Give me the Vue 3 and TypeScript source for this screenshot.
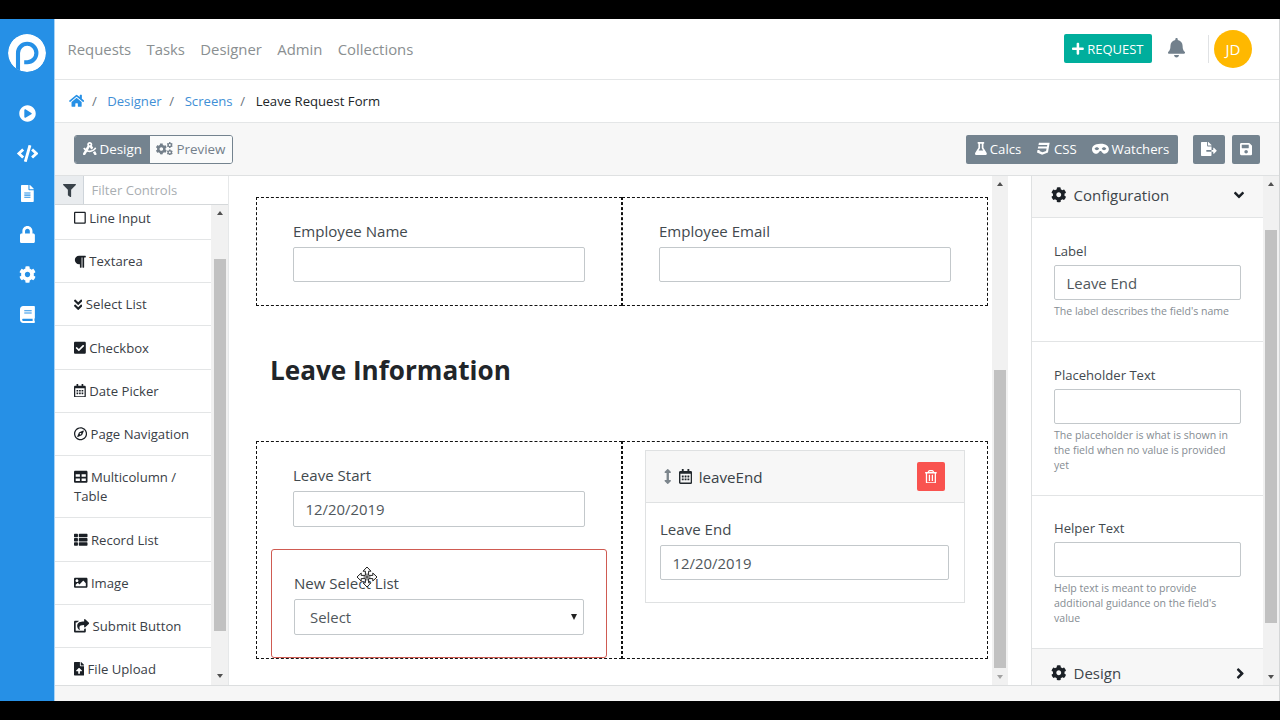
<script setup lang="ts">
import { h, type FunctionalComponent } from 'vue'

interface Glyph { w: number; d: string }

const glyphs: Record<string, Glyph> = {
  play: { w: 512, d: 'M256 8C119 8 8 119 8 256s111 248 248 248 248-111 248-248S393 8 256 8zm115.7 272l-176 101c-15.8 8.8-35.7-2.5-35.7-21V152c0-18.4 19.8-29.8 35.7-21l176 107c16.4 9.2 16.4 32.9 0 42z' },
  code: { w: 640, d: 'M278.9 511.5l-61-17.7c-6.4-1.8-10-8.5-8.2-14.9L346.2 8.7c1.8-6.4 8.5-10 14.9-8.2l61 17.7c6.4 1.8 10 8.5 8.2 14.9L293.8 503.3c-1.9 6.4-8.5 10.1-14.9 8.2zm-114-112.2l43.5-46.4c4.6-4.9 4.3-12.7-.8-17.2L117 256l90.6-79.7c5.1-4.5 5.5-12.3.8-17.2l-43.5-46.4c-4.5-4.8-12.1-5.1-17-.5L3.8 247.2c-5.1 4.7-5.1 12.8 0 17.5l144.1 135.1c4.9 4.6 12.5 4.4 17-.5zm327.2.6l144.1-135.1c5.1-4.7 5.1-12.8 0-17.5L492.1 112.1c-4.8-4.5-12.4-4.3-17 .5L431.6 159c-4.6 4.9-4.3 12.7.8 17.2L523 256l-90.6 79.7c-5.1 4.5-5.5 12.3-.8 17.2l43.5 46.4c4.5 4.9 12.1 5.1 17 .6z' },
  file: { w: 384, d: 'M224 136V0H24C10.7 0 0 10.7 0 24v464c0 13.3 10.7 24 24 24h336c13.3 0 24-10.7 24-24V160H248c-13.2 0-24-10.8-24-24zm64 236c0 6.6-5.4 12-12 12H108c-6.6 0-12-5.4-12-12v-8c0-6.6 5.4-12 12-12h168c6.6 0 12 5.4 12 12v8zm0-64c0 6.6-5.4 12-12 12H108c-6.6 0-12-5.4-12-12v-8c0-6.6 5.4-12 12-12h168c6.6 0 12 5.4 12 12v8zm0-72v8c0 6.6-5.4 12-12 12H108c-6.6 0-12-5.4-12-12v-8c0-6.6 5.4-12 12-12h168c6.6 0 12 5.4 12 12zm96-114.1v6.1H256V0h6.1c6.4 0 12.5 2.5 17 7l97.9 98c4.5 4.5 7 10.6 7 16.9z' },
  lock: { w: 448, d: 'M400 224h-24v-72C376 68.2 307.8 0 224 0S72 68.2 72 152v72H48c-26.5 0-48 21.5-48 48v192c0 26.5 21.5 48 48 48h352c26.5 0 48-21.5 48-48V272c0-26.5-21.5-48-48-48zm-104 0H152v-72c0-39.7 32.3-72 72-72s72 32.3 72 72v72z' },
  cog: { w: 512, d: 'M487.4 315.7l-42.6-24.6c4.3-23.2 4.3-47 0-70.2l42.6-24.6c4.9-2.8 7.1-8.6 5.5-14-11.1-35.6-30-67.8-54.7-94.6-3.8-4.1-10-5.1-14.8-2.3L380.8 110c-17.9-15.4-38.5-27.3-60.8-35.1V25.8c0-5.6-3.9-10.5-9.4-11.7-36.7-8.2-74.3-7.8-109.2 0-5.5 1.2-9.4 6.1-9.4 11.7V75c-22.2 7.9-42.8 19.8-60.8 35.1L88.7 85.5c-4.9-2.8-11-1.9-14.8 2.3-24.7 26.7-43.6 58.9-54.7 94.6-1.7 5.4.6 11.2 5.5 14L67.3 221c-4.3 23.2-4.3 47 0 70.2l-42.6 24.6c-4.9 2.8-7.1 8.6-5.5 14 11.1 35.6 30 67.8 54.7 94.6 3.8 4.1 10 5.1 14.8 2.3l42.6-24.6c17.9 15.4 38.5 27.3 60.8 35.1v49.2c0 5.6 3.9 10.5 9.4 11.7 36.7 8.2 74.3 7.8 109.2 0 5.5-1.2 9.4-6.1 9.4-11.7v-49.2c22.2-7.9 42.8-19.8 60.8-35.1l42.6 24.6c4.9 2.8 11 1.9 14.8-2.3 24.7-26.7 43.6-58.9 54.7-94.6 1.5-5.5-.7-11.3-5.6-14.1zM256 336c-44.1 0-80-35.9-80-80s35.9-80 80-80 80 35.9 80 80-35.9 80-80 80z' },
  book: { w: 448, d: 'M448 360V24c0-13.3-10.7-24-24-24H96C43 0 0 43 0 96v320c0 53 43 96 96 96h328c13.3 0 24-10.7 24-24v-16c0-7.5-3.5-14.3-8.9-18.7-4.2-15.4-4.2-59.3 0-74.7 5.4-4.3 8.9-11.1 8.9-18.6zM128 134c0-3.3 2.7-6 6-6h212c3.3 0 6 2.7 6 6v20c0 3.3-2.7 6-6 6H134c-3.3 0-6-2.7-6-6v-20zm0 64c0-3.3 2.7-6 6-6h212c3.3 0 6 2.7 6 6v20c0 3.3-2.7 6-6 6H134c-3.3 0-6-2.7-6-6v-20zm253.4 250H96c-17.7 0-32-14.3-32-32 0-17.6 14.4-32 32-32h285.4c-1.9 17.1-1.9 46.9 0 64z' },
  home: { w: 576, d: 'M280.37 148.26L96 300.11V464a16 16 0 0 0 16 16l112.06-.29a16 16 0 0 0 15.92-16V368a16 16 0 0 1 16-16h64a16 16 0 0 1 16 16v95.64a16 16 0 0 0 16 16.05L464 480a16 16 0 0 0 16-16V300L295.67 148.26a12.19 12.19 0 0 0-15.3 0zM571.6 251.47L488 182.56V44.05a12 12 0 0 0-12-12h-56a12 12 0 0 0-12 12v72.61L318.47 43a48 48 0 0 0-61 0L4.34 251.47a12 12 0 0 0-1.6 16.9l25.5 31A12 12 0 0 0 45.15 301l235.22-193.74a12.19 12.19 0 0 1 15.3 0L530.9 301a12 12 0 0 0 16.9-1.6l25.5-31a12 12 0 0 0-1.7-16.93z' },
  filter: { w: 512, d: 'M487.976 0H24.028C2.71 0-8.047 25.866 7.058 40.971L192 225.941V432c0 7.831 3.821 15.17 10.237 19.662l80 55.98C298.02 518.69 320 507.493 320 487.98V225.941l184.947-184.97C520.021 25.896 509.338 0 487.976 0z' },
  plus: { w: 448, d: 'M416 208H272V64c0-17.67-14.33-32-32-32h-32c-17.67 0-32 14.33-32 32v144H32c-17.67 0-32 14.33-32 32v32c0 17.67 14.33 32 32 32h144v144c0 17.67 14.33 32 32 32h32c17.67 0 32-14.33 32-32V304h144c17.67 0 32-14.33 32-32v-32c0-17.67-14.33-32-32-32z' },
  bell: { w: 448, d: 'M224 512c35.32 0 63.97-28.65 63.97-64H160.03c0 35.35 28.65 64 63.97 64zm215.39-149.71c-19.32-20.76-55.47-51.99-55.47-154.29 0-77.7-54.48-139.9-127.94-155.16V32c0-17.67-14.32-32-31.98-32s-31.98 14.33-31.98 32v20.84C118.56 68.1 64.08 130.3 64.08 208c0 102.3-36.15 133.53-55.47 154.29-6 6.45-8.66 14.16-8.61 21.71.11 16.4 12.98 32 32.1 32h383.8c19.12 0 32-15.6 32.1-32 .05-7.55-2.61-15.27-8.61-21.71z' },
  compass: { w: 512, d: 'M457.01 344.42c-25.05 20.33-52.63 37.18-82.54 49.05l54.38 94.19 53.95 23.04c9.81 4.19 20.89-2.21 22.17-12.8l7.02-58.25-54.98-95.23zm42.49-94.56c4.86-7.67 1.89-17.99-6.05-22.39l-28.07-15.57c-7.48-4.15-16.61-1.46-21.26 5.72C403.01 281.15 332.25 320 256 320c-23.93 0-47.23-4.25-69.41-11.53l67.36-116.68c.7.02 1.34.21 2.04.21s1.35-.19 2.04-.21l51.09 88.5c31.23-8.96 59.56-25.75 82.61-48.92l-51.79-89.71C347.39 128.03 352 112.63 352 96c0-53.02-42.98-96-96-96s-96 42.98-96 96c0 16.63 4.61 32.03 12.05 45.66l-68.3 118.31c-12.55-11.61-23.96-24.59-33.68-39-4.79-7.1-13.97-9.62-21.38-5.33l-27.75 16.07c-7.85 4.54-10.63 14.9-5.64 22.47 15.57 23.64 34.69 44.21 55.98 62.02L0 439.66l7.02 58.25c1.28 10.59 12.36 16.99 22.17 12.8l53.95-23.04 70.8-122.63C186.13 377.28 220.62 384 256 384c99.05 0 190.88-51.01 243.5-134.14zM256 64c17.67 0 32 14.33 32 32s-14.33 32-32 32-32-14.33-32-32 14.33-32 32-32z' },
  flask: { w: 448, d: 'M437.2 403.5L320 215V64h8c13.3 0 24-10.7 24-24V24c0-13.3-10.7-24-24-24H120c-13.3 0-24 10.7-24 24v16c0 13.3 10.7 24 24 24h8v151L10.8 403.5C-18.5 450.6 15.3 512 70.9 512h306.2c55.7 0 89.4-61.5 60.1-108.5zM137.9 320l48.2-77.6c3.7-5.2 5.8-11.6 5.8-18.4V64h64v160c0 6.9 2.2 13.2 5.8 18.4l48.2 77.6h-172z' },
  css: { w: 512, d: 'M480 32l-64 368-223.3 80L0 400l19.6-94.8h82l-8 40.6L210 390.2l134.1-44.4 18.8-97.1H29.5l16-82h333.7l10.5-52.7H56.3l16.3-82H480z' },
  mask: { w: 640, d: 'M320.67 64c-442.6 0-357.57 384-158.46 384 39.9 0 77.47-20.69 101.42-55.86l25.73-37.79c15.66-22.99 46.97-22.99 62.63 0l25.73 37.79C401.66 427.31 439.23 448 479.13 448c189.86 0 290.63-384-158.46-384zM184 308.36c-41.06 0-67.76-25.66-80.08-41.05-5.23-6.53-5.23-16.09 0-22.63 12.32-15.4 39.01-41.05 80.08-41.05s67.76 25.66 80.08 41.05c5.23 6.53 5.23 16.09 0 22.63-12.32 15.4-39.02 41.05-80.08 41.05zm272 0c-41.06 0-67.76-25.66-80.08-41.05-5.23-6.53-5.23-16.09 0-22.63 12.32-15.4 39.01-41.05 80.08-41.05s67.76 25.66 80.08 41.05c5.23 6.53 5.23 16.09 0 22.63-12.32 15.4-39.02 41.05-80.08 41.05z' },
  export: { w: 576, d: 'M384 121.9c0-6.3-2.5-12.4-7-16.9L279.1 7c-4.5-4.5-10.6-7-17-7H256v128h128zM571 308l-95.7-96.4c-10.1-10.1-27.4-3-27.4 11.3V288h-64v64h64v65.2c0 14.3 17.3 21.4 27.4 11.3L571 332c6.6-6.6 6.6-17.4 0-24zm-379 28v-32c0-8.8 7.2-16 16-16h176V160H248c-13.2 0-24-10.8-24-24V0H24C10.7 0 0 10.7 0 24v464c0 13.3 10.7 24 24 24h336c13.3 0 24-10.7 24-24V352H208c-8.8 0-16-7.2-16-16z' },
  save: { w: 448, d: 'M433.941 129.941l-83.882-83.882A48 48 0 0 0 316.118 32H48C21.49 32 0 53.49 0 80v352c0 26.51 21.49 48 48 48h352c26.51 0 48-21.49 48-48V163.882a48 48 0 0 0-14.059-33.941zM224 416c-35.346 0-64-28.654-64-64 0-35.346 28.654-64 64-64s64 28.654 64 64c0 35.346-28.654 64-64 64zm96-304.52V212c0 6.627-5.373 12-12 12H76c-6.627 0-12-5.373-12-12V108c0-6.627 5.373-12 12-12h228.52c3.183 0 6.235 1.264 8.485 3.515l3.48 3.48A11.996 11.996 0 0 1 320 111.48z' },
  square: { w: 448, d: 'M400 32H48C21.5 32 0 53.5 0 80v352c0 26.5 21.5 48 48 48h352c26.5 0 48-21.5 48-48V80c0-26.5-21.5-48-48-48zm-6 400H54c-3.3 0-6-2.7-6-6V86c0-3.3 2.7-6 6-6h340c3.3 0 6 2.7 6 6v340c0 3.3-2.7 6-6 6z' },
  paragraph: { w: 448, d: 'M448 48v32a16 16 0 0 1-16 16h-48v368a16 16 0 0 1-16 16h-32a16 16 0 0 1-16-16V96h-32v368a16 16 0 0 1-16 16h-32a16 16 0 0 1-16-16V352h-32a160 160 0 0 1 0-320h240a16 16 0 0 1 16 16z' },
  chevrons: { w: 320, d: 'M143 256.3L7 120.3c-9.4-9.4-9.4-24.6 0-33.9l22.6-22.6c9.4-9.4 24.6-9.4 33.9 0l96.4 96.4 96.4-96.4c9.4-9.4 24.6-9.4 33.9 0L313 86.3c9.4 9.4 9.4 24.6 0 33.9l-136 136c-9.4 9.5-24.6 9.5-34 .1zm34 192l136-136c9.4-9.4 9.4-24.6 0-33.9l-22.6-22.6c-9.4-9.4-24.6-9.4-33.9 0L160 352.1l-96.4-96.4c-9.4-9.4-24.6-9.4-33.9 0L7 278.3c-9.4 9.4-9.4 24.6 0 33.9l136 136c9.4 9.5 24.6 9.5 34 .1z' },
  check: { w: 448, d: 'M400 480H48c-26.51 0-48-21.49-48-48V80c0-26.51 21.49-48 48-48h352c26.51 0 48 21.49 48 48v352c0 26.51-21.49 48-48 48zm-204.686-98.059l184-184c6.248-6.248 6.248-16.379 0-22.627l-22.627-22.627c-6.248-6.248-16.379-6.249-22.628 0L184 302.745l-70.059-70.059c-6.248-6.248-16.379-6.248-22.628 0l-22.627 22.627c-6.248 6.248-6.248 16.379 0 22.627l104 104c6.249 6.25 16.379 6.25 22.628.001z' },
  calendar: { w: 448, d: 'M148 288h-40c-6.6 0-12-5.4-12-12v-40c0-6.6 5.4-12 12-12h40c6.6 0 12 5.4 12 12v40c0 6.6-5.4 12-12 12zm108-12v-40c0-6.6-5.4-12-12-12h-40c-6.6 0-12 5.4-12 12v40c0 6.6 5.4 12 12 12h40c6.6 0 12-5.4 12-12zm96 0v-40c0-6.6-5.4-12-12-12h-40c-6.6 0-12 5.4-12 12v40c0 6.6 5.4 12 12 12h40c6.6 0 12-5.4 12-12zm-96 96v-40c0-6.6-5.4-12-12-12h-40c-6.6 0-12 5.4-12 12v40c0 6.6 5.4 12 12 12h40c6.6 0 12-5.4 12-12zm-96 0v-40c0-6.6-5.4-12-12-12h-40c-6.6 0-12 5.4-12 12v40c0 6.6 5.4 12 12 12h40c6.6 0 12-5.4 12-12zm192 0v-40c0-6.6-5.4-12-12-12h-40c-6.6 0-12 5.4-12 12v40c0 6.6 5.4 12 12 12h40c6.6 0 12-5.4 12-12zm96-260v352c0 26.5-21.5 48-48 48H48c-26.5 0-48-21.5-48-48V112c0-26.5 21.5-48 48-48h48V12c0-6.6 5.4-12 12-12h40c6.6 0 12 5.4 12 12v52h128V12c0-6.6 5.4-12 12-12h40c6.6 0 12 5.4 12 12v52h48c26.5 0 48 21.5 48 48zm-48 346V160H48v298c0 3.3 2.7 6 6 6h340c3.3 0 6-2.7 6-6z' },
  navigate: { w: 496, d: 'M347.94 129.86L203.6 195.83a31.938 31.938 0 0 0-15.77 15.77l-65.97 144.34c-7.61 16.65 9.54 33.81 26.2 26.2l144.34-65.97a31.938 31.938 0 0 0 15.77-15.77l65.97-144.34c7.61-16.66-9.54-33.81-26.2-26.2zm-77.36 148.72c-12.47 12.47-32.69 12.47-45.16 0-12.47-12.47-12.47-32.69 0-45.16 12.47-12.47 32.69-12.47 45.16 0 12.47 12.47 12.47 32.69 0 45.16zM248 8C111.03 8 0 119.03 0 256s111.03 248 248 248 248-111.03 248-248S384.97 8 248 8zm0 448c-110.28 0-200-89.72-200-200S137.72 56 248 56s200 89.72 200 200-89.72 200-200 200z' },
  table: { w: 512, d: 'M464 32H48C21.49 32 0 53.49 0 80v352c0 26.51 21.49 48 48 48h416c26.51 0 48-21.49 48-48V80c0-26.51-21.49-48-48-48zM224 416H64v-96h160v96zm0-160H64v-96h160v96zm224 160H288v-96h160v96zm0-160H288v-96h160v96z' },
  list: { w: 512, d: 'M149.333 216v80c0 13.255-10.745 24-24 24H24c-13.255 0-24-10.745-24-24v-80c0-13.255 10.745-24 24-24h101.333c13.255 0 24 10.745 24 24zM0 376v80c0 13.255 10.745 24 24 24h101.333c13.255 0 24-10.745 24-24v-80c0-13.255-10.745-24-24-24H24c-13.255 0-24 10.745-24 24zM125.333 32H24C10.745 32 0 42.745 0 56v80c0 13.255 10.745 24 24 24h101.333c13.255 0 24-10.745 24-24V56c0-13.255-10.745-24-24-24zm80 448H488c13.255 0 24-10.745 24-24v-80c0-13.255-10.745-24-24-24H205.333c-13.255 0-24 10.745-24 24v80c0 13.255 10.745 24 24 24zm-24-424v80c0 13.255 10.745 24 24 24H488c13.255 0 24-10.745 24-24V56c0-13.255-10.745-24-24-24H205.333c-13.255 0-24 10.745-24 24zm24 264H488c13.255 0 24-10.745 24-24v-80c0-13.255-10.745-24-24-24H205.333c-13.255 0-24 10.745-24 24v80c0 13.255 10.745 24 24 24z' },
  image: { w: 512, d: 'M464 448H48c-26.51 0-48-21.49-48-48V112c0-26.51 21.49-48 48-48h416c26.51 0 48 21.49 48 48v288c0 26.51-21.49 48-48 48zM112 120c-30.928 0-56 25.072-56 56s25.072 56 56 56 56-25.072 56-56-25.072-56-56-56zM64 384h384V272l-87.515-87.515c-4.686-4.686-12.284-4.686-16.971 0L208 320l-55.515-55.515c-4.686-4.686-12.284-4.686-16.971 0L64 336v48z' },
  share: { w: 576, d: 'M568.482 177.448L424.479 313.433C409.3 327.768 384 317.14 384 295.985v-71.963c-144.575.97-205.566 35.113-164.775 171.353 4.483 14.973-12.846 26.567-25.006 17.33C155.252 383.105 120 326.488 120 269.339c0-143.937 117.599-172.5 264-173.312V24.012c0-21.174 25.317-31.768 40.479-17.448l144.003 135.988c10.02 9.463 10.028 25.425 0 34.896zM384 379.128V448H64V128h50.916a11.99 11.99 0 0 0 8.648-3.693c14.953-15.568 32.237-27.89 51.014-37.676C185.708 80.83 181.584 64 169.033 64H48C21.49 64 0 85.49 0 112v352c0 26.51 21.49 48 48 48h352c26.51 0 48-21.49 48-48v-88.806c0-8.288-8.197-14.066-16.011-11.302a71.83 71.83 0 0 1-34.189 3.377c-7.27-1.046-13.8 4.514-13.8 11.859z' },
  upload: { w: 384, d: 'M224 136V0H24C10.7 0 0 10.7 0 24v464c0 13.3 10.7 24 24 24h336c13.3 0 24-10.7 24-24V160H248c-13.2 0-24-10.8-24-24zm65.18 216.01H224v80c0 8.84-7.16 16-16 16h-32c-8.84 0-16-7.16-16-16v-80H94.82c-14.28 0-21.41-17.29-11.27-27.36l96.42-95.7c6.65-6.61 17.39-6.61 24.04 0l96.42 95.7c10.15 10.07 3.03 27.36-11.25 27.36zM377 105L279.1 7c-4.5-4.5-10.6-7-17-7H256v128h128v-6.1c0-6.3-2.5-12.4-7-16.9z' },
  updown: { w: 256, d: 'M214.059 377.941H168V134.059h46.059c21.382 0 32.09-25.851 16.971-40.971L144.971 7.029c-9.373-9.373-24.568-9.373-33.941 0L24.971 93.088c-15.119 15.119-4.411 40.971 16.971 40.971H88v243.882H41.941c-21.382 0-32.09 25.851-16.971 40.971l86.059 86.059c9.373 9.373 24.568 9.373 33.941 0l86.059-86.059c15.12-15.119 4.412-40.971-16.97-40.971z' },
  trash: { w: 448, d: 'M268 416h24a12 12 0 0 0 12-12V188a12 12 0 0 0-12-12h-24a12 12 0 0 0-12 12v216a12 12 0 0 0 12 12zM432 80h-82.41l-34-56.7A48 48 0 0 0 274.41 0H173.59a48 48 0 0 0-41.16 23.3L98.41 80H16A16 16 0 0 0 0 96v16a16 16 0 0 0 16 16h16v336a48 48 0 0 0 48 48h288a48 48 0 0 0 48-48V128h16a16 16 0 0 0 16-16V96a16 16 0 0 0-16-16zM171.84 50.91A6 6 0 0 1 177 48h94a6 6 0 0 1 5.15 2.91L293.61 80H154.39zM368 464H80V128h288zm-212-48h24a12 12 0 0 0 12-12V188a12 12 0 0 0-12-12h-24a12 12 0 0 0-12 12v216a12 12 0 0 0 12 12z' },
  down: { w: 320, d: 'M143 352.3L7 216.3c-9.4-9.4-9.4-24.6 0-33.9l22.6-22.6c9.4-9.4 24.6-9.4 33.9 0l96.4 96.4 96.4-96.4c9.4-9.4 24.6-9.4 33.9 0l22.6 22.6c9.4 9.4 9.4 24.6 0 33.9l-136 136c-9.2 9.4-24.4 9.4-33.8 0z' },
  right: { w: 256, d: 'M224.3 273l-136 136c-9.4 9.4-24.6 9.4-33.9 0l-22.6-22.6c-9.4-9.4-9.4-24.6 0-33.9l96.4-96.4-96.4-96.4c-9.4-9.4-9.4-24.6 0-33.9L54.3 103c9.4-9.4 24.6-9.4 33.9 0l136 136c9.5 9.4 9.5 24.6.1 34z' },
}

const Icon: FunctionalComponent<{ name: string; size: number }> = (props) => {
  const g = glyphs[props.name]
  return h(
    'svg',
    { viewBox: `0 0 ${g.w} 512`, width: (g.w / 512) * props.size, height: props.size, fill: 'currentColor' },
    [h('path', { d: g.d, 'fill-rule': props.name === 'flask' ? 'evenodd' : 'nonzero' })],
  )
}
Icon.props = ['name', 'size']

const rail = ['play', 'code', 'file', 'lock', 'cog', 'book']
const nav = ['Requests', 'Tasks', 'Designer', 'Admin', 'Collections']
const controls = [
  { icon: 'square', label: 'Line Input' },
  { icon: 'paragraph', label: 'Textarea' },
  { icon: 'chevrons', label: 'Select List' },
  { icon: 'check', label: 'Checkbox' },
  { icon: 'calendar', label: 'Date Picker' },
  { icon: 'navigate', label: 'Page Navigation' },
  { icon: 'table', label: 'Multicolumn / Table' },
  { icon: 'list', label: 'Record List' },
  { icon: 'image', label: 'Image' },
  { icon: 'share', label: 'Submit Button' },
  { icon: 'upload', label: 'File Upload' },
]
const settings = [
  { label: 'Label', value: 'Leave End', help: "The label describes the field's name" },
  { label: 'Placeholder Text', value: '', help: 'The placeholder is what is shown in the field when no value is provided yet' },
  { label: 'Helper Text', value: '', help: "Help text is meant to provide additional guidance on the field's value" },
]
</script>

<template>
  <div class="screen">
    <div class="app">
      <aside class="rail">
        <svg class="logo" viewBox="0 0 38 38" width="38" height="38">
          <circle cx="19" cy="19" r="19" fill="#fff" />
          <path d="M10 40V19a9.2 9.2 0 1 1 9.2 9.2H16.2" fill="none" stroke="#2690e6" stroke-width="4.1" />
        </svg>
        <nav class="rail-items">
          <span v-for="r in rail" :key="r" class="rail-item"><Icon :name="r" :size="17" /></span>
        </nav>
      </aside>

      <div class="main">
        <header class="top">
          <nav class="nav"><a v-for="n in nav" :key="n">{{ n }}</a></nav>
          <div class="top-right">
            <button class="request"><Icon name="plus" :size="13.5" />REQUEST</button>
            <Icon class="bell" name="bell" :size="19.5" />
            <span class="avatar-wrap"><span class="avatar">JD</span></span>
          </div>
        </header>

        <div class="crumbs">
          <Icon class="home" name="home" :size="13.5" /><i>/</i><a>Designer</a><i>/</i><a>Screens</a><i>/</i><b>Leave Request Form</b>
        </div>

        <div class="toolbar">
          <div class="modes">
            <button class="mode active"><Icon name="compass" :size="13.5" />Design</button>
            <button class="mode">
              <svg viewBox="0 0 640 512" width="17" height="13.6" fill="currentColor">
                <path :d="glyphs.cog.d" transform="translate(-14 46) scale(.84)" />
                <path :d="glyphs.cog.d" transform="translate(404 0) scale(.45)" />
                <path :d="glyphs.cog.d" transform="translate(404 276) scale(.45)" />
              </svg>Preview
            </button>
          </div>
          <div class="actions">
            <div class="group">
              <span><Icon name="flask" :size="13.5" />Calcs</span>
              <span class="g2"><Icon name="css" :size="13.5" />CSS</span>
              <span class="g3"><Icon name="mask" :size="13.5" />Watchers</span>
            </div>
            <button class="square export"><Icon name="export" :size="14" /></button>
            <button class="square save"><Icon name="save" :size="14" /></button>
          </div>
        </div>

        <div class="work">
          <section class="palette">
            <div class="filter">
              <span class="filter-icon"><Icon name="filter" :size="13" /></span>
              <input class="filter-input" placeholder="Filter Controls" />
            </div>
            <div class="palette-body">
              <ul class="list">
                <li v-for="c in controls" :key="c.label"><Icon :name="c.icon" :size="13.5" />&nbsp;{{ c.label }}</li>
              </ul>
              <div class="bar bar-list"><span class="up"></span><span class="thumb"></span><span class="dn"></span></div>
            </div>
          </section>

          <section class="canvas">
            <div class="row row-a">
              <div class="cell"><label>Employee Name</label><input class="field" /></div>
              <div class="cell"><label>Employee Email</label><input class="field" /></div>
            </div>
            <h1>Leave Information</h1>
            <div class="row row-b">
              <div class="cell">
                <label>Leave Start</label><input class="field" value="12/20/2019" />
                <div class="picked">
                  <label>New Select List</label>
                  <div class="field select"><span>Select</span><span class="caret"></span></div>
                  <svg class="cursor" viewBox="0 0 22 22" width="22" height="22">
                    <path d="M11 1l4 4.2h-2.4v4.2h4.2V7L21 11l-4.2 4v-2.4h-4.2v4.2H15L11 21l-4-4.2h2.4v-4.2H5.2V15L1 11l4.2-4v2.4h4.2V5.2H7z" fill="#fff" stroke="#222" stroke-width="1" stroke-linejoin="round" />
                    <path d="M11 7.5v7M7.5 11h7" stroke="#222" stroke-width="1" />
                  </svg>
                </div>
              </div>
              <div class="cell cell-card">
                <div class="card">
                  <div class="card-head">
                    <Icon class="drag" name="updown" :size="15" />
                    <Icon class="cal" name="calendar" :size="15" />
                    <span>leaveEnd</span>
                    <button class="trash"><Icon name="trash" :size="13.5" /></button>
                  </div>
                  <div class="card-body"><label>Leave End</label><input class="field" value="12/20/2019" /></div>
                </div>
              </div>
            </div>
          </section>
          <div class="bar bar-canvas"><span class="up"></span><span class="thumb"></span><span class="dn faint"></span></div>

          <section class="inspector">
            <div class="inspector-body">
              <div class="section"><Icon name="cog" :size="15.5" /><span>Configuration</span><Icon class="arrow" name="down" :size="16" /></div>
              <div v-for="(s, i) in settings" :key="s.label" class="setting" :class="'s' + i">
                <label>{{ s.label }}</label>
                <input class="field" :value="s.value" />
                <p>{{ s.help }}</p>
              </div>
              <div class="section last"><Icon name="cog" :size="15.5" /><span>Design</span><Icon class="arrow" name="right" :size="17" /></div>
            </div>
            <div class="bar bar-inspector"><span class="up"></span><span class="thumb"></span><span class="dn"></span></div>
          </section>
        </div>
        <footer class="foot"></footer>
      </div>
    </div>
  </div>
</template>

<style>
body { background: #000; overflow: hidden; }
</style>

<style scoped>
* { box-sizing: border-box; }
svg { display: block; flex: none; }
button { font: inherit; border: 0; margin: 0; padding: 0; cursor: pointer; }
.screen { width: 1280px; height: 720px; background: #000; padding: 19px 0; overflow: hidden; font-family: "Open Sans", "Noto Sans", sans-serif; font-size: 14px; color: #3a4248; }
.app { display: flex; height: 682px; background: #fff; }
.rail { width: 55px; background: #2690e6; border-right: 1px solid #a9d3f6; display: flex; flex-direction: column; align-items: center; padding-top: 14.5px; color: #fff; }
.logo { border-radius: 50%; }
.rail-items { display: flex; flex-direction: column; padding: 21.5px 0 0 1px; }
.rail-item { height: 40.3px; display: flex; align-items: center; justify-content: center; }
.main { width: 1225px; display: flex; flex-direction: column; border-right: 1px solid #d4d6d7; }
.top { height: 61px; border-bottom: 1px solid #e4e6e7; display: flex; align-items: center; justify-content: space-between; padding: 0 27px 1px 12.5px; }
.nav { display: flex; gap: 15.3px; font-size: 14.9px; color: #8a8f91; }
.top-right { display: flex; align-items: center; }
.request { width: 88px; height: 29px; background: #00ae9c; color: #fff; border-radius: 2px; display: flex; align-items: center; justify-content: center; gap: 3px; font-size: 13px; }
.bell { color: #72808c; margin-left: 16px; margin-bottom: 1px; }
.avatar-wrap { display: flex; margin-left: 23px; padding-left: 6px; background: linear-gradient(#e0e2e4, #e0e2e4) left center / 1px 28px no-repeat; }
.avatar { width: 38px; height: 38px; border-radius: 50%; background: #ffb800; color: #fff; font-size: 15px; display: flex; align-items: center; justify-content: center; }
.crumbs { height: 43px; border-bottom: 1px solid #e4e6e7; display: flex; align-items: center; padding-left: 14px; font-size: 13.15px; color: #3f8fd6; }
.crumbs i { font-style: normal; color: #6c757d; margin: 0 10.5px 0 7.7px; }
.crumbs b { font-weight: 400; color: #212529; }
.home { color: #2690e6; }
.toolbar { height: 53px; background: #f7f7f7; border-bottom: 1px solid #dfe1e2; display: flex; align-items: center; justify-content: space-between; padding: 0 19px; }
.modes { display: flex; border: 1px solid #74838f; border-radius: 3px; height: 29px; width: 159px; overflow: hidden; }
.mode { display: flex; align-items: center; justify-content: center; gap: 3px; width: 82px; background: #fafbfb; color: #74808b; font-size: 13.4px; padding-bottom: 1px; }
.mode.active { width: 75px; background: #74838f; color: #fff; }
.actions { display: flex; color: #fff; font-size: 13.2px; }
.group { width: 212px; height: 29px; background: #74838f; border-radius: 2px; display: flex; align-items: center; padding: 0 0 1px 9px; }
.group span { display: flex; align-items: center; gap: 3px; }
.group .g2 { margin-left: 16px; }
.group .g3 { margin-left: 15px; }
.square { height: 29px; background: #74838f; color: #fff; border-radius: 2px; display: flex; align-items: center; justify-content: center; }
.export { width: 32px; margin-left: 15px; }
.save { width: 28px; margin-left: 7px; }
.work { height: 509px; display: flex; overflow: hidden; }
.foot { flex: 1; background: #f6f6f6; border-top: 1px solid #dcdedf; }
.palette { width: 174px; border-right: 1px solid #e6e8e9; display: flex; flex-direction: column; }
.filter { height: 29px; display: flex; border-bottom: 1px solid #d5d8da; }
.filter-icon { width: 29px; background: #e9ecef; border-right: 1px solid #ced4da; display: flex; align-items: center; justify-content: center; color: #39424a; }
.filter-input { flex: 1; min-width: 0; border: 0; outline: 0; padding: 0 7.5px; font: 13.1px "Open Sans", sans-serif; background: #fff; }
.filter-input::placeholder { color: #a9aeb2; opacity: 1; }
.palette-body { height: 480px; display: flex; overflow: hidden; }
.list { width: 156px; margin: -8px 0 0; padding: 0; list-style: none; font-size: 13.15px; line-height: 19.5px; color: #3a4046; }
.list li { border-bottom: 1px solid #e3e5e6; padding: 12.1px 10px 10.55px 19px; }
.list svg { display: inline-block; vertical-align: -1.8px; color: #1b2026; }
.bar { width: 16px; background: #f1f1f1; display: flex; flex-direction: column; align-items: center; flex: none; }
.bar .up, .bar .dn { width: 0; height: 0; border: 3.5px solid transparent; flex: none; }
.bar .up { border-top: 0; border-bottom: 4px solid #505050; }
.bar .dn { border-bottom: 0; border-top: 4px solid #505050; }
.bar .dn.faint { border-top-color: #a3a3a3; }
.thumb { width: 12px; background: #c1c1c1; }
.bar-list { padding-top: 6px; width: 17px; }
.bar-list .thumb { margin-top: 44px; height: 372px; }
.bar-list .dn { margin-top: 43px; }
.bar-canvas { padding-top: 6px; }
.bar-canvas .thumb { margin-top: 184px; height: 298px; }
.bar-canvas .dn { margin-top: 7px; }
.bar-inspector { padding-top: 6px; }
.bar-inspector .thumb { margin-top: 44px; height: 393px; }
.bar-inspector .dn { margin-top: 52px; }
.canvas { width: 763px; padding: 21px 4px 0 27px; }
.row { display: grid; grid-template-columns: 366px 366px; }
.row-a { height: 109px; }
.row-b { height: 218px; }
.cell { border: 1px dashed #111; padding: 22px 36px 0; }
label { display: block; line-height: 22px; font-size: 15.05px; color: #42494e; }
.field { display: flex; align-items: center; width: 100%; height: 36px; border: 1px solid #c3c8cb; border-radius: 2px; outline: 0; background: #fff; padding: 0 11.5px; font: 14.9px "Open Sans", sans-serif; color: #50575c; }
.cell .field { margin-top: 5px; }
.row-a .field, .cell .card .field { height: 35px; }
h1 { margin: 45px 0 0 14px; height: 90px; font-size: 26.1px; line-height: 38px; font-weight: 700; color: #212529; }
.picked { position: relative; margin: 22px -14px 0 -22px; height: 109px; width: 336px; border: 1px solid #cf5b52; border-radius: 3px; padding: 22px 22px 0; }
.cell .select { padding: 0 6px 0 15px; justify-content: space-between; }
.caret { border: 3px solid transparent; border-top: 6px solid #222; border-bottom: 0; }
.cursor { position: absolute; left: 84px; top: 16px; }
.cell-card { padding: 8px 22px 0; }
.card { height: 153px; border: 1px solid #dfe1e2; width: 320px; }
.card-head { height: 52px; background: #f7f7f7; border-bottom: 1px solid #dfe1e2; display: flex; align-items: center; padding: 0 19px 0 18px; font-size: 15.2px; }
.drag { color: #7c858c; }
.cal { color: #22282d; margin: 0 7px; }
.trash { margin-left: auto; width: 28px; height: 29px; border-radius: 2px; background: #f9534f; color: #fff; display: flex; align-items: center; justify-content: center; }
.card-body { padding: 15px 15px 0 14px; }
.inspector { margin-left: 23px; width: 248px; border-left: 1px solid #dfe1e2; display: flex; }
.inspector-body { width: 231px; }
.section { height: 42px; background: #f7f7f7; border-bottom: 1px solid #e2e4e5; display: flex; align-items: center; padding: 0 19px 3px; font-size: 15px; color: #3e464b; }
.section svg { color: #1b2026; }
.section span { margin-left: 7px; }
.section .arrow { margin-left: auto; }
.section.last { height: 60px; padding-bottom: 12px; border: 0; }
.setting { border-bottom: 1px solid #e2e4e5; padding: 22px 22px 0; }
.setting label { font-size: 13.1px; }
.setting .field { margin-top: 3px; height: 35px; }
.setting p { margin: 4px 0 0; font-size: 10.55px; line-height: 15px; color: #858c92; }
.s0 { height: 124px; }
.s1 { height: 154px; }
.s2 { height: 153px; padding-top: 21px; }
</style>
